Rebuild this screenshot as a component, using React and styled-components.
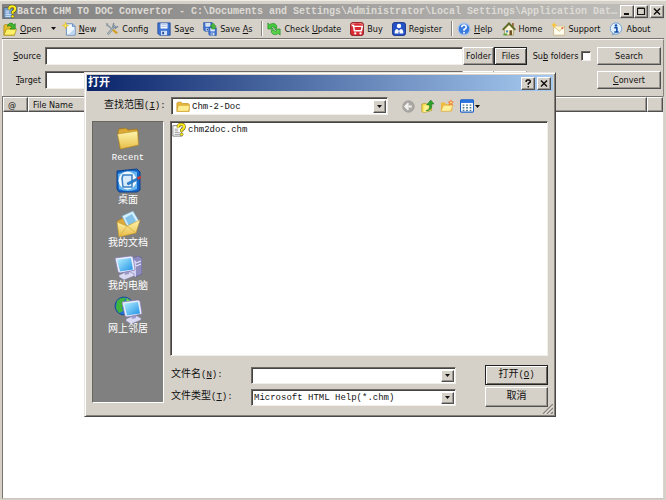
import React from "react";
import styled, { createGlobalStyle, css } from "styled-components";

const face = "#d5d0c8";
const uiFont = '"DejaVu Sans Condensed", "DejaVu Sans", "Liberation Sans", sans-serif';
const songFont = '"Liberation Mono", "Noto Sans CJK SC", monospace';

const GlobalStyle = createGlobalStyle`
  * { box-sizing: border-box; }
  body { margin: 0; background: ${face}; color: #111; font: 9px/12px ${uiFont}; }
  button, input, select { font: inherit; color: inherit; margin: 0; padding: 0; border-radius: 0; }
  svg { display: block; flex: none; }
`;

const raised = css`
  background: ${face};
  border: 1px solid;
  border-color: #fff #505050 #505050 #fff;
  box-shadow: inset -1px -1px 0 #9a968f;
`;
const sunken = css`
  background: #fff;
  border: 1px solid;
  border-color: #6e6b66 #f2efea #f2efea #6e6b66;
  box-shadow: inset 1px 1px 0 #45433f;
`;

/* ---------- main window ---------- */
const Window = styled.main`
  position: relative;
  display: flex;
  flex-direction: column;
  min-height: 100vh;
  padding: 3px 2px 1px;
  background: ${face};
  border-top: 1px solid #efece6;
`;
const TitleBar = styled.header`
  display: flex;
  align-items: center;
  height: 15px;
  padding-left: 1px;
  background: linear-gradient(90deg, #808080, #c2c0bc);
`;
const Title = styled.h1`
  flex: 1;
  min-width: 0;
  white-space: nowrap;
  margin: 0;
  font: bold 10px/14px ${songFont};
  color: #dedbd5;
`;
const WindowButtons = styled.div`
  display: flex;
`;
const CaptionButton = styled.button`
  ${raised}
  display: grid;
  place-items: center;
  width: 14px;
  height: 13px;
  margin-left: ${(p) => (p.$apart ? 2 : 0)}px;
`;
const Toolbar = styled.nav`
  display: flex;
  align-items: center;
  height: 20px;
  padding: 0 1px;
  gap: 9px;
  border-bottom: 1px solid #77736d;
`;
const ToolButton = styled.button`
  display: flex;
  align-items: center;
  gap: 3px;
  border: 0;
  background: none;
  white-space: nowrap;
`;
const OpenGroup = styled.div`
  display: flex;
  align-items: center;
  gap: 9px;
  margin-right: -3px;
`;
const Separator = styled.span`
  width: 2px;
  height: 15px;
  margin-right: -5px;
  border-left: 1px solid #85817b;
  border-right: 1px solid #fff;
`;
const Panel = styled.form`
  display: grid;
  grid-template-columns: 42px 1fr 31px 33px 70px 64px;
  grid-auto-rows: 18px;
  row-gap: 6px;
  align-items: stretch;
  padding: 7px 2px 7px 0;
  border-top: 1px solid #f5f2ed;
  border-left: 1px solid #fff;
  border-right: 1px solid #8a867f;
`;
const FieldLabel = styled.label`
  align-self: center;
  justify-self: end;
  padding-right: 4px;
`;
const TextField = styled.input`
  ${sunken}
  width: 100%;
  min-width: 0;
  padding: 0 4px;
`;
const PushButton = styled.button`
  ${raised}
  white-space: nowrap;
  ${(p) => p.$default && css`
    border-color: #222;
    box-shadow: inset 1px 1px 0 #fff, inset -1px -1px 0 #6b6863;
  `}
`;
const CheckLabel = styled.label`
  display: flex;
  align-items: center;
  justify-content: center;
  gap: 3px;
  white-space: nowrap;
`;
const CheckBox = styled.input`
  ${sunken}
  appearance: none;
  width: 10px;
  height: 10px;
`;
const FileArea = styled.section`
  flex: 1;
  background: #fff;
  border: 1px solid;
  border-color: #77736d #d9d5ce #c9c6c0 #77736d;
`;
const FileTable = styled.table`
  width: 100%;
  table-layout: fixed;
  border-collapse: separate;
  border-spacing: 0;
`;
const HeadCell = styled.th`
  ${raised}
  width: ${(p) => p.$width || "auto"};
  height: 15px;
  padding: 0 4px;
  text-align: left;
  font-weight: normal;
`;

/* ---------- file dialog ---------- */
const Dialog = styled.section`
  position: absolute;
  top: 71px;
  left: 84px;
  right: 110px;
  padding: 2px 2px 9px;
  background: ${face};
  border: 1px solid;
  border-color: #e8e5df #4a4845 #4a4845 #e8e5df;
  box-shadow: inset 1px 1px 0 #fff, inset -1px -1px 0 #85817b;
  font: 9px/12px ${songFont};
`;
const DialogTitle = styled.header`
  display: flex;
  align-items: center;
  height: 16px;
  padding: 0 2px 0 1px;
  background: linear-gradient(90deg, #0a246a, #a6caf0);
`;
const DialogName = styled.h2`
  flex: 1;
  margin: 0;
  color: #fff;
  font: bold 11px/15px ${songFont};
`;
const DialogBody = styled.div`
  display: grid;
  grid-template-columns: 72px 1fr;
  column-gap: 6px;
  padding: 6px 5px 0;
`;
const LookRow = styled.div`
  grid-column: 1 / -1;
  display: flex;
  align-items: center;
  height: 18px;
  margin-bottom: 6px;
`;
const LookLabel = styled.label`
  width: 79px;
  padding-left: 12px;
  font-size: 10px;
  white-space: nowrap;
`;
const Combo = styled.div`
  ${sunken}
  display: flex;
  align-items: center;
  width: ${(p) => p.$width || "auto"};
  height: ${(p) => p.$height}px;
  padding: 2px 1px 1px 2px;
`;
const ComboIcon = styled.span`
  padding: 0 2px;
`;
const ComboSelect = styled.select`
  appearance: none;
  flex: 1;
  min-width: 0;
  border: 0;
  background: transparent;
`;
const ComboInput = styled.input`
  flex: 1;
  min-width: 0;
  border: 0;
  background: transparent;
`;
const DropButton = styled.button`
  ${raised}
  align-self: stretch;
  display: grid;
  place-items: center;
  width: 13px;
`;
const NavTools = styled.div`
  display: flex;
  align-items: center;
  gap: 6px;
  margin-left: 14px;
`;
const NavButton = styled.button`
  display: flex;
  align-items: center;
  gap: 1px;
  border: 0;
  background: none;
`;
const Places = styled.nav`
  display: flex;
  flex-direction: column;
  gap: 3px;
  height: 282px;
  padding-top: 2px;
  background: #808080;
  border: 1px solid;
  border-color: #6a6763 #fff #fff #6a6763;
`;
const Place = styled.button`
  display: flex;
  flex-direction: column;
  align-items: center;
  border: 0;
  background: none;
  color: #fff;
  font-size: ${(p) => (p.$latin ? 9 : 10)}px;
  line-height: 12px;
`;
const DialogMain = styled.div`
  display: flex;
  flex-direction: column;
  gap: 9px;
`;
const FileList = styled.ul`
  ${sunken}
  flex: 1 0 235px;
  margin: 0;
  padding: 1px;
  list-style: none;
  max-height: 235px;
`;
const FileEntry = styled.li`
  display: flex;
  align-items: center;
  gap: 2px;
`;
const FileForm = styled.form`
  display: grid;
  grid-template-columns: 80px 1fr 63px;
  grid-auto-rows: 20px;
  row-gap: 2px;
  align-items: center;
  padding-left: 1px;
`;
const FormLabel = styled.label`
  white-space: nowrap;
  font-size: 10px;
`;
const FormCombo = styled(Combo)`
  margin-right: 29px;
`;
const DialogButton = styled(PushButton)`
  height: 100%;
  font-size: 10px;
`;
const Key = styled.span`
  font-size: 9px;
`;
const Grip = styled.svg`
  position: absolute;
  right: 2px;
  bottom: 2px;
`;

/* ---------- drawings ---------- */
const Svg = ({ size = 14, children }) => (
  <svg width={size} height={size} viewBox="0 0 16 16" aria-hidden="true">{children}</svg>
);
const Arrow = () => (
  <svg width="5" height="3" viewBox="0 0 5 3" aria-hidden="true"><path d="M0 0h5L2.500 3z" fill="#111" /></svg>
);
const CaptionGlyph = ({ kind }) => (
  <svg width="9" height="9" viewBox="0 0 9 9" fill="none" stroke="#111" aria-hidden="true">
    {kind === "min" && <path d="M1 7h5" strokeWidth="2" />}
    {kind === "max" && <path d="M.5 1.500h7v6h-7zM.5 1h7" strokeWidth="1.200" />}
    {kind === "close" && <path d="M1 1.500l6 6M7 1.500l-6 6" strokeWidth="1.500" />}
    {kind === "help" && <path d="M2.200 3V1.800L3.200 1h2l1 .8v1.400L4.300 4.700v1M4.300 7v1.500" strokeWidth="1.500" />}
  </svg>
);
const FolderShape = () => (
  <>
    <path d="M1 13V3.500L2 2.500h4l1.500 1.500H14l1 1V13z" fill="#e9b93c" stroke="#b8860b" strokeWidth=".7" />
    <path d="M1.200 13L2.500 6H15.500L14.500 13z" fill="#ffec91" stroke="#c99a24" strokeWidth=".7" />
  </>
);
const OpenIcon = () => (
  <Svg>
    <path d="M1 15L1 4l1-1h4l2 2h5v10z" fill="#e5c02f" stroke="#a38412" strokeWidth=".8" />
    <path d="M1 15L4 8h11.500L13 15z" fill="#fff06a" stroke="#a58b18" strokeWidth=".8" />
    <path d="M5 5c1-4 5-5 7-2l2-1v6H8l2-2c-1-2-3-2-5-1z" fill="#43b62d" stroke="#19791a" strokeWidth=".7" />
  </Svg>
);
const NewIcon = () => (
  <Svg>
    <path d="M5 2h7l3 3v10H5z" fill="#eef6ff" stroke="#5b83ba" />
    <path d="M12 2v3h3" fill="#afcdef" stroke="#5b83ba" />
    <path d="M4 0l1 3 3 1-3 1-1 3-1-3-3-1 3-1z" fill="#ffe04a" stroke="#e2b12b" strokeWidth=".5" />
    <path d="M14 8v6H8z" fill="#bcd7f4" />
  </Svg>
);
const ConfigIcon = () => (
  <Svg>
    <path d="M3 14L12 4" stroke="#6f8290" strokeWidth="2.400" />
    <path d="M3 14L12 4" stroke="#dbe7ee" />
    <path d="M10 1l-1 4 3 2 3-2" fill="none" stroke="#7e8f9b" strokeWidth="1.500" />
    <path d="M2 3l6 5" stroke="#8998a3" strokeWidth="1.500" />
    <path d="M9 9l5 4" stroke="#d3a02c" strokeWidth="2.800" />
    <path d="M1 1l3 1-2 3z" fill="#8998a3" />
  </Svg>
);
const DiskShape = ({ x = 0, y = 0, s = 1 }) => (
  <g transform={`translate(${x} ${y}) scale(${s})`}>
    <path d="M1 1h14v14H3l-2-2z" fill="#3e72d2" stroke="#234b9b" />
    <path d="M4 1.500h8v6H4z" fill="#f4f8ff" />
    <path d="M5 3h6M5 5h6" stroke="#90acd8" strokeWidth=".8" />
    <path d="M4.500 10h7v5h-7z" fill="#cfdff5" />
    <path d="M6 11h2v3H6z" fill="#234b9b" />
  </g>
);
const SaveIcon = () => <Svg><DiskShape /></Svg>;
const SaveAsIcon = () => (
  <Svg>
    <DiskShape s={0.7} />
    <DiskShape x={6} y={6} s={0.62} />
    <path d="M9 2h4v3h2l-3.500 4L8 5h1z" fill="#47ba3c" stroke="#237b27" strokeWidth=".5" transform="rotate(180 11.500 5)" />
  </Svg>
);
const UpdateIcon = () => (
  <Svg>
    <path d="M1 8V1l2 2c3-2 6-2 8 1v3H8c0-2-2-2-3-1l2 2z" fill="#45c83e" stroke="#15851a" strokeWidth=".7" />
    <path d="M15 8v7l-2-2c-3 2-6 2-8-1V9h3c0 2 2 2 3 1L9 8z" fill="#58d24b" stroke="#15851a" strokeWidth=".7" />
  </Svg>
);
const BuyIcon = () => (
  <Svg>
    <rect x=".5" y=".5" width="15" height="15" rx="3" fill="#d82c32" stroke="#8b1720" />
    <path d="M1 4q7-5 14 0V3q-1-2-3-2H4Q1 1 1 4" fill="#f08080" />
    <path d="M2 4h2l1 6h8l1-5H5" fill="none" stroke="#fff" strokeWidth="1.700" />
    <circle cx="6" cy="13" r="1.300" fill="#fff" /><circle cx="12" cy="13" r="1.300" fill="#fff" />
  </Svg>
);
const RegisterIcon = () => (
  <Svg>
    <rect x=".5" y=".5" width="15" height="15" rx="3" fill="#2451c8" stroke="#153083" />
    <circle cx="8" cy="4.500" r="2.500" fill="#fff" />
    <path d="M3 13q0-5 3-5l2 2 2-2q3 0 3 5z" fill="#fff" />
    <path d="M8 10l-1 3h2z" fill="#2451c8" />
  </Svg>
);
const HelpIcon = () => (
  <Svg>
    <circle cx="8" cy="8" r="6.800" fill="#397be0" stroke="#a9c2e7" strokeWidth="1.400" />
    <path d="M5.500 6q0-2.500 2.500-2.500T10.500 6Q10.500 7.500 8 8.500V10" fill="none" stroke="#fff" strokeWidth="1.800" />
    <circle cx="8" cy="12.200" r="1.100" fill="#fff" />
  </Svg>
);
const HomeIcon = () => (
  <Svg>
    <path d="M3 8v7h10V8L8 3z" fill="#fff6d2" stroke="#8b7a45" strokeWidth=".7" />
    <path d="M11.500 1h2v5l-2-2z" fill="#9a6633" />
    <path d="M.8 9L8 1.500 15.200 9" fill="none" stroke="#5d6b28" strokeWidth="2" />
    <path d="M8.500 9.500h3V15h-3z" fill="#6f5326" />
    <path d="M4.500 9.500h2.500v2.500H4.500z" fill="#4b8cc6" />
    <path d="M1 15h5v-2H2z" fill="#55a33c" />
  </Svg>
);
const SupportIcon = () => (
  <Svg>
    <path d="M3 5h12.500v10H3z" fill="#fffdf2" stroke="#c7ad70" strokeWidth=".8" />
    <path d="M3 5l6.500 5.500 6-5.500" fill="#fff5c8" stroke="#c7ad70" strokeWidth=".8" />
    <path d="M3.500 0l1 2.500L7 3.500 4.500 4.500l-1 2.500-1-2.500L0 3.500 2.500 2.500z" fill="#ffc42e" />
    <path d="M12 6h2v2h-2z" fill="#dc6338" />
  </Svg>
);
const AboutIcon = () => (
  <Svg>
    <path d="M4 12L3 15.500 8 14z" fill="#8ca9c8" />
    <circle cx="8" cy="7.500" r="6.500" fill="#e3f1ff" stroke="#6c9bcb" />
    <circle cx="8" cy="4" r="1.500" fill="#124da9" />
    <path d="M6 6.500h3v5M6 11.500h5" fill="none" stroke="#124da9" strokeWidth="1.800" />
  </Svg>
);
const ChmIcon = ({ app }) => (
  <Svg>
    <path d="M1 3h8l2 2v10H1z" fill={app ? "#75a2d4" : "#fff"} stroke="#555" strokeWidth=".8" />
    <path d="M3 7h4M3 9h4M3 11h6M3 13h6" stroke={app ? "#fff" : "#777"} strokeWidth=".8" />
    <path d="M7 5q0-3.500 3.500-3.500T14 4.500Q14 6.500 11 8v2" fill="none" stroke="#57510a" strokeWidth="3.400" />
    <path d="M7 5q0-3.500 3.500-3.500T14 4.500Q14 6.500 11 8v2" fill="none" stroke="#ffed21" strokeWidth="2.300" />
    <circle cx="11" cy="13" r="1.700" fill="#ffed21" stroke="#57510a" strokeWidth=".6" />
  </Svg>
);
const BackIcon = () => (
  <Svg size={13}>
    <circle cx="8" cy="8" r="7" fill="#aaa8a4" stroke="#9b9995" />
    <path d="M8 4L4 8l4 4M4.500 8H12" fill="none" stroke="#f4f2ef" strokeWidth="2.200" />
  </Svg>
);
const UpIcon = () => (
  <Svg size={13}>
    <path d="M1 5l5-1 1 1h6v8L3 15.500 1 14z" fill="#f8df58" stroke="#a88a24" strokeWidth=".8" />
    <path d="M4 7l9-2-2 8-8 2.500z" fill="#fff18d" />
    <path d="M6 13c4-1 5-3 4-7H7l5-6 4 5h-3c1 5-2 9-7 8z" fill="#2da12b" stroke="#126d18" strokeWidth=".6" />
  </Svg>
);
const NewFolderIcon = () => (
  <Svg>
    <path d="M1 14V4h5l1 2h7v8z" fill="#efbd42" />
    <path d="M1 14l3-7h11l-3 7z" fill="#fff09a" stroke="#d59e32" strokeWidth=".6" />
    <path d="M12.500 0l.8 2.500L16 3l-2 1.500.5 3-2-1.500-2.500 1.500.5-3L8.500 3l3-.5z" fill="#f27831" />
    <circle cx="12.500" cy="4" r="1.200" fill="#ffe183" />
  </Svg>
);
const ViewIcon = () => (
  <Svg>
    <rect x=".6" y="1" width="14.800" height="14" rx="1" fill="#fff" stroke="#1b5fc3" strokeWidth="1.200" />
    <path d="M1 1h14v3.500H1z" fill="#2774df" />
    <path d="M3 7h2M7 7h2M11 7h2M3 10h2M7 10h2M11 10h2M3 13h2M7 13h2M11 13h2" stroke="#457786" strokeWidth="1.600" />
  </Svg>
);
const BigSvg = ({ children }) => (
  <svg width="28" height="28" viewBox="0 0 28 28" aria-hidden="true">
    <defs>
      <linearGradient id="paper" x1="0" y1="0" x2="0" y2="1"><stop stopColor="#fff6b0" /><stop offset="1" stopColor="#e8bc45" /></linearGradient>
      <linearGradient id="screen" x1="0" y1="0" x2="1" y2="1"><stop stopColor="#b4f2ff" /><stop offset="1" stopColor="#1e8fe6" /></linearGradient>
    </defs>
    {children}
  </svg>
);
const RecentIcon = () => (
  <BigSvg>
    <path d="M4 7l1-2 7-1 2 2 9-1 1 3v13l-18 4z" fill="#dca936" stroke="#98701c" strokeWidth=".7" />
    <path d="M3.500 10l20-3 1 14-18 4z" fill="url(#paper)" stroke="#b58e2c" strokeWidth=".6" />
  </BigSvg>
);
const DesktopIcon = () => (
  <BigSvg>
    <path d="M3 4l20-2 3 3v18l-3 2H5l-2-3z" fill="#1766c9" stroke="#0b438f" />
    <path d="M4 7q10-5 19-2v17q-9 4-18 0z" fill="#65b5ef" />
    <circle cx="13.500" cy="13.500" r="9" fill="#f1f9ff" />
    <path d="M9 8h9v12H9l-1-9z" fill="#d8ebfb" stroke="#377fc5" strokeWidth="1.500" />
    <path d="M13 16l10-5 1 2-10 5z" fill="#2783d7" stroke="#155190" strokeWidth=".5" />
    <path d="M23 10l4-1v2l-3 2z" fill="#d43829" />
  </BigSvg>
);
const DocumentsIcon = () => (
  <BigSvg>
    <path d="M3 11l8-4 12 2-2 14-14 3z" fill="#d9a93b" stroke="#9b752b" strokeWidth=".6" />
    <path d="M8 6l11-5 6 10-10 9z" fill="#d7efff" stroke="#70a4c8" strokeWidth=".6" />
    <path d="M11 8l7-4 4 7-7 5z" fill="#82c2e9" />
    <path d="M3 12l10 4 13-6-4 13-17 4z" fill="url(#paper)" stroke="#c4952d" strokeWidth=".6" />
    <path d="M5 27l8-11 9 7" fill="none" stroke="#d0a23b" strokeWidth=".6" />
  </BigSvg>
);
const Monitor = ({ x = 0, y = 0 }) => (
  <g transform={`translate(${x} ${y})`}>
    <path d="M4 21l9-4 6 3v2l-10 4-5-3z" fill="#d9d9f2" stroke="#7877a0" strokeWidth=".5" />
    <path d="M9 15h5v5l-4 1z" fill="#9d9bc9" />
    <path d="M0 4l16-2 2 1 2 13-15 3-2-1z" fill="#eeeeff" stroke="#7c7ab2" strokeWidth=".7" />
    <path d="M2 5.500L16 4l2 11.500L5 17.500z" fill="url(#screen)" />
  </g>
);
const ComputerIcon = () => (
  <BigSvg>
    <path d="M16 6l8-3 4 2v16l-7 3-5-3z" fill="#8e8bbf" stroke="#605d91" strokeWidth=".6" />
    <path d="M16 6l6 2v16l-6-3z" fill="#d0cff0" />
    <path d="M22 10l5-2M22 13l5-2" stroke="#ebeaff" strokeWidth="1.200" />
    <Monitor x={1} y={1} />
  </BigSvg>
);
const NetworkIcon = () => (
  <BigSvg>
    <circle cx="10" cy="10" r="9" fill="#2370ce" stroke="#174c8e" />
    <path d="M3 5q4-4 9-3l-2 3 2 3-4 3 1 4-4 2-3-5z" fill="#40b33b" />
    <path d="M13 2l5 4-4 6-3-5z" fill="#6bd047" />
    <Monitor x={8} y={2} />
  </BigSvg>
);

const Combobox = ({ height, button, children, as: Box = Combo, width }) => (
  <Box $height={height} $width={width}>
    {children}
    <DropButton type="button" tabIndex={-1} aria-label={button}><Arrow /></DropButton>
  </Box>
);

const Tool = ({ icon, children }) => <ToolButton type="button">{icon}<span>{children}</span></ToolButton>;

function MainToolbar() {
  return (
    <Toolbar aria-label="Toolbar">
      <OpenGroup>
        <Tool icon={<OpenIcon />}><u>O</u>pen</Tool>
        <ToolButton type="button" aria-label="Open recent"><Arrow /></ToolButton>
      </OpenGroup>
      <Tool icon={<NewIcon />}><u>N</u>ew</Tool>
      <Tool icon={<ConfigIcon />}>Config</Tool>
      <Tool icon={<SaveIcon />}>Sa<u>v</u>e</Tool>
      <Tool icon={<SaveAsIcon />}>Save <u>A</u>s</Tool>
      <Separator />
      <Tool icon={<UpdateIcon />}>Check <u>U</u>pdate</Tool>
      <Tool icon={<BuyIcon />}>Buy</Tool>
      <Tool icon={<RegisterIcon />}>Register</Tool>
      <Separator />
      <Tool icon={<HelpIcon />}><u>H</u>elp</Tool>
      <Tool icon={<HomeIcon />}>Home</Tool>
      <Tool icon={<SupportIcon />}>Support</Tool>
      <Tool icon={<AboutIcon />}>About</Tool>
    </Toolbar>
  );
}

function OpenDialog() {
  return (
    <Dialog role="dialog" aria-labelledby="dialog-name">
      <DialogTitle>
        <DialogName id="dialog-name">打开</DialogName>
        <WindowButtons>
          <CaptionButton type="button" aria-label="Help"><CaptionGlyph kind="help" /></CaptionButton>
          <CaptionButton type="button" $apart aria-label="Close"><CaptionGlyph kind="close" /></CaptionButton>
        </WindowButtons>
      </DialogTitle>
      <DialogBody>
        <LookRow>
          <LookLabel htmlFor="look-in">查找范围<Key>(<u>I</u>):</Key></LookLabel>
          <Combobox height={18} width="217px" button="Show folders">
            <ComboIcon><Svg><FolderShape /></Svg></ComboIcon>
            <ComboSelect id="look-in"><option>Chm-2-Doc</option></ComboSelect>
          </Combobox>
          <NavTools>
            <NavButton type="button" aria-label="Back"><BackIcon /></NavButton>
            <NavButton type="button" aria-label="Up one level"><UpIcon /></NavButton>
            <NavButton type="button" aria-label="New folder"><NewFolderIcon /></NavButton>
            <NavButton type="button" aria-label="View"><ViewIcon /><Arrow /></NavButton>
          </NavTools>
        </LookRow>
        <Places aria-label="Places">
          <Place type="button" $latin><RecentIcon />Recent</Place>
          <Place type="button"><DesktopIcon />桌面</Place>
          <Place type="button"><DocumentsIcon />我的文档</Place>
          <Place type="button"><ComputerIcon />我的电脑</Place>
          <Place type="button"><NetworkIcon />网上邻居</Place>
        </Places>
        <DialogMain>
          <FileList>
            <FileEntry><ChmIcon />chm2doc.chm</FileEntry>
          </FileList>
          <FileForm onSubmit={(e) => e.preventDefault()}>
            <FormLabel htmlFor="file-name">文件名<Key>(<u>N</u>):</Key></FormLabel>
            <Combobox as={FormCombo} height={17} button="Show file names">
              <ComboInput id="file-name" type="text" />
            </Combobox>
            <DialogButton $default type="submit">打开<Key>(<u>O</u>)</Key></DialogButton>
            <FormLabel htmlFor="file-type">文件类型<Key>(<u>T</u>):</Key></FormLabel>
            <Combobox as={FormCombo} height={17} button="Show file types">
              <ComboSelect id="file-type"><option>Microsoft HTML Help(*.chm)</option></ComboSelect>
            </Combobox>
            <DialogButton type="button">取消</DialogButton>
          </FileForm>
        </DialogMain>
      </DialogBody>
      <Grip width="10" height="10" viewBox="0 0 10 10" aria-hidden="true">
        <path d="M0 10L10 0M4 10l6-6M8 10l2-2" stroke="#85817b" strokeWidth="1.300" />
        <path d="M1.500 10L10 1.500M5.500 10L10 5.500" stroke="#fff" strokeWidth=".7" />
      </Grip>
    </Dialog>
  );
}

export default function App() {
  return (
    <>
      <GlobalStyle />
      <Window>
        <TitleBar>
          <ChmIcon app />
          <Title>Batch CHM TO DOC Convertor - C:\Documents and Settings\Administrator\Local Settings\Application Dat…</Title>
          <WindowButtons>
            <CaptionButton type="button" aria-label="Minimize"><CaptionGlyph kind="min" /></CaptionButton>
            <CaptionButton type="button" aria-label="Maximize"><CaptionGlyph kind="max" /></CaptionButton>
            <CaptionButton type="button" $apart aria-label="Close"><CaptionGlyph kind="close" /></CaptionButton>
          </WindowButtons>
        </TitleBar>
        <MainToolbar />
        <Panel onSubmit={(e) => e.preventDefault()}>
          <FieldLabel htmlFor="source"><u>S</u>ource</FieldLabel>
          <TextField id="source" type="text" />
          <PushButton type="button">Folder</PushButton>
          <PushButton type="button" $default>Files</PushButton>
          <CheckLabel><span>Su<u>b</u> folders</span><CheckBox type="checkbox" /></CheckLabel>
          <PushButton type="button">Search</PushButton>
          <FieldLabel htmlFor="target"><u>T</u>arget</FieldLabel>
          <TextField id="target" type="text" />
          <PushButton type="button" aria-label="Target folder" />
          <PushButton type="button" aria-label="Target files" />
          <span />
          <PushButton type="submit"><u>C</u>onvert</PushButton>
        </Panel>
        <FileArea>
          <FileTable>
            <thead>
              <tr>
                <HeadCell scope="col" $width="25px">@</HeadCell>
                <HeadCell scope="col">File Name</HeadCell>
                <HeadCell scope="col" $width="16px" aria-label="Status" />
              </tr>
            </thead>
          </FileTable>
        </FileArea>
        <OpenDialog />
      </Window>
    </>
  );
}
